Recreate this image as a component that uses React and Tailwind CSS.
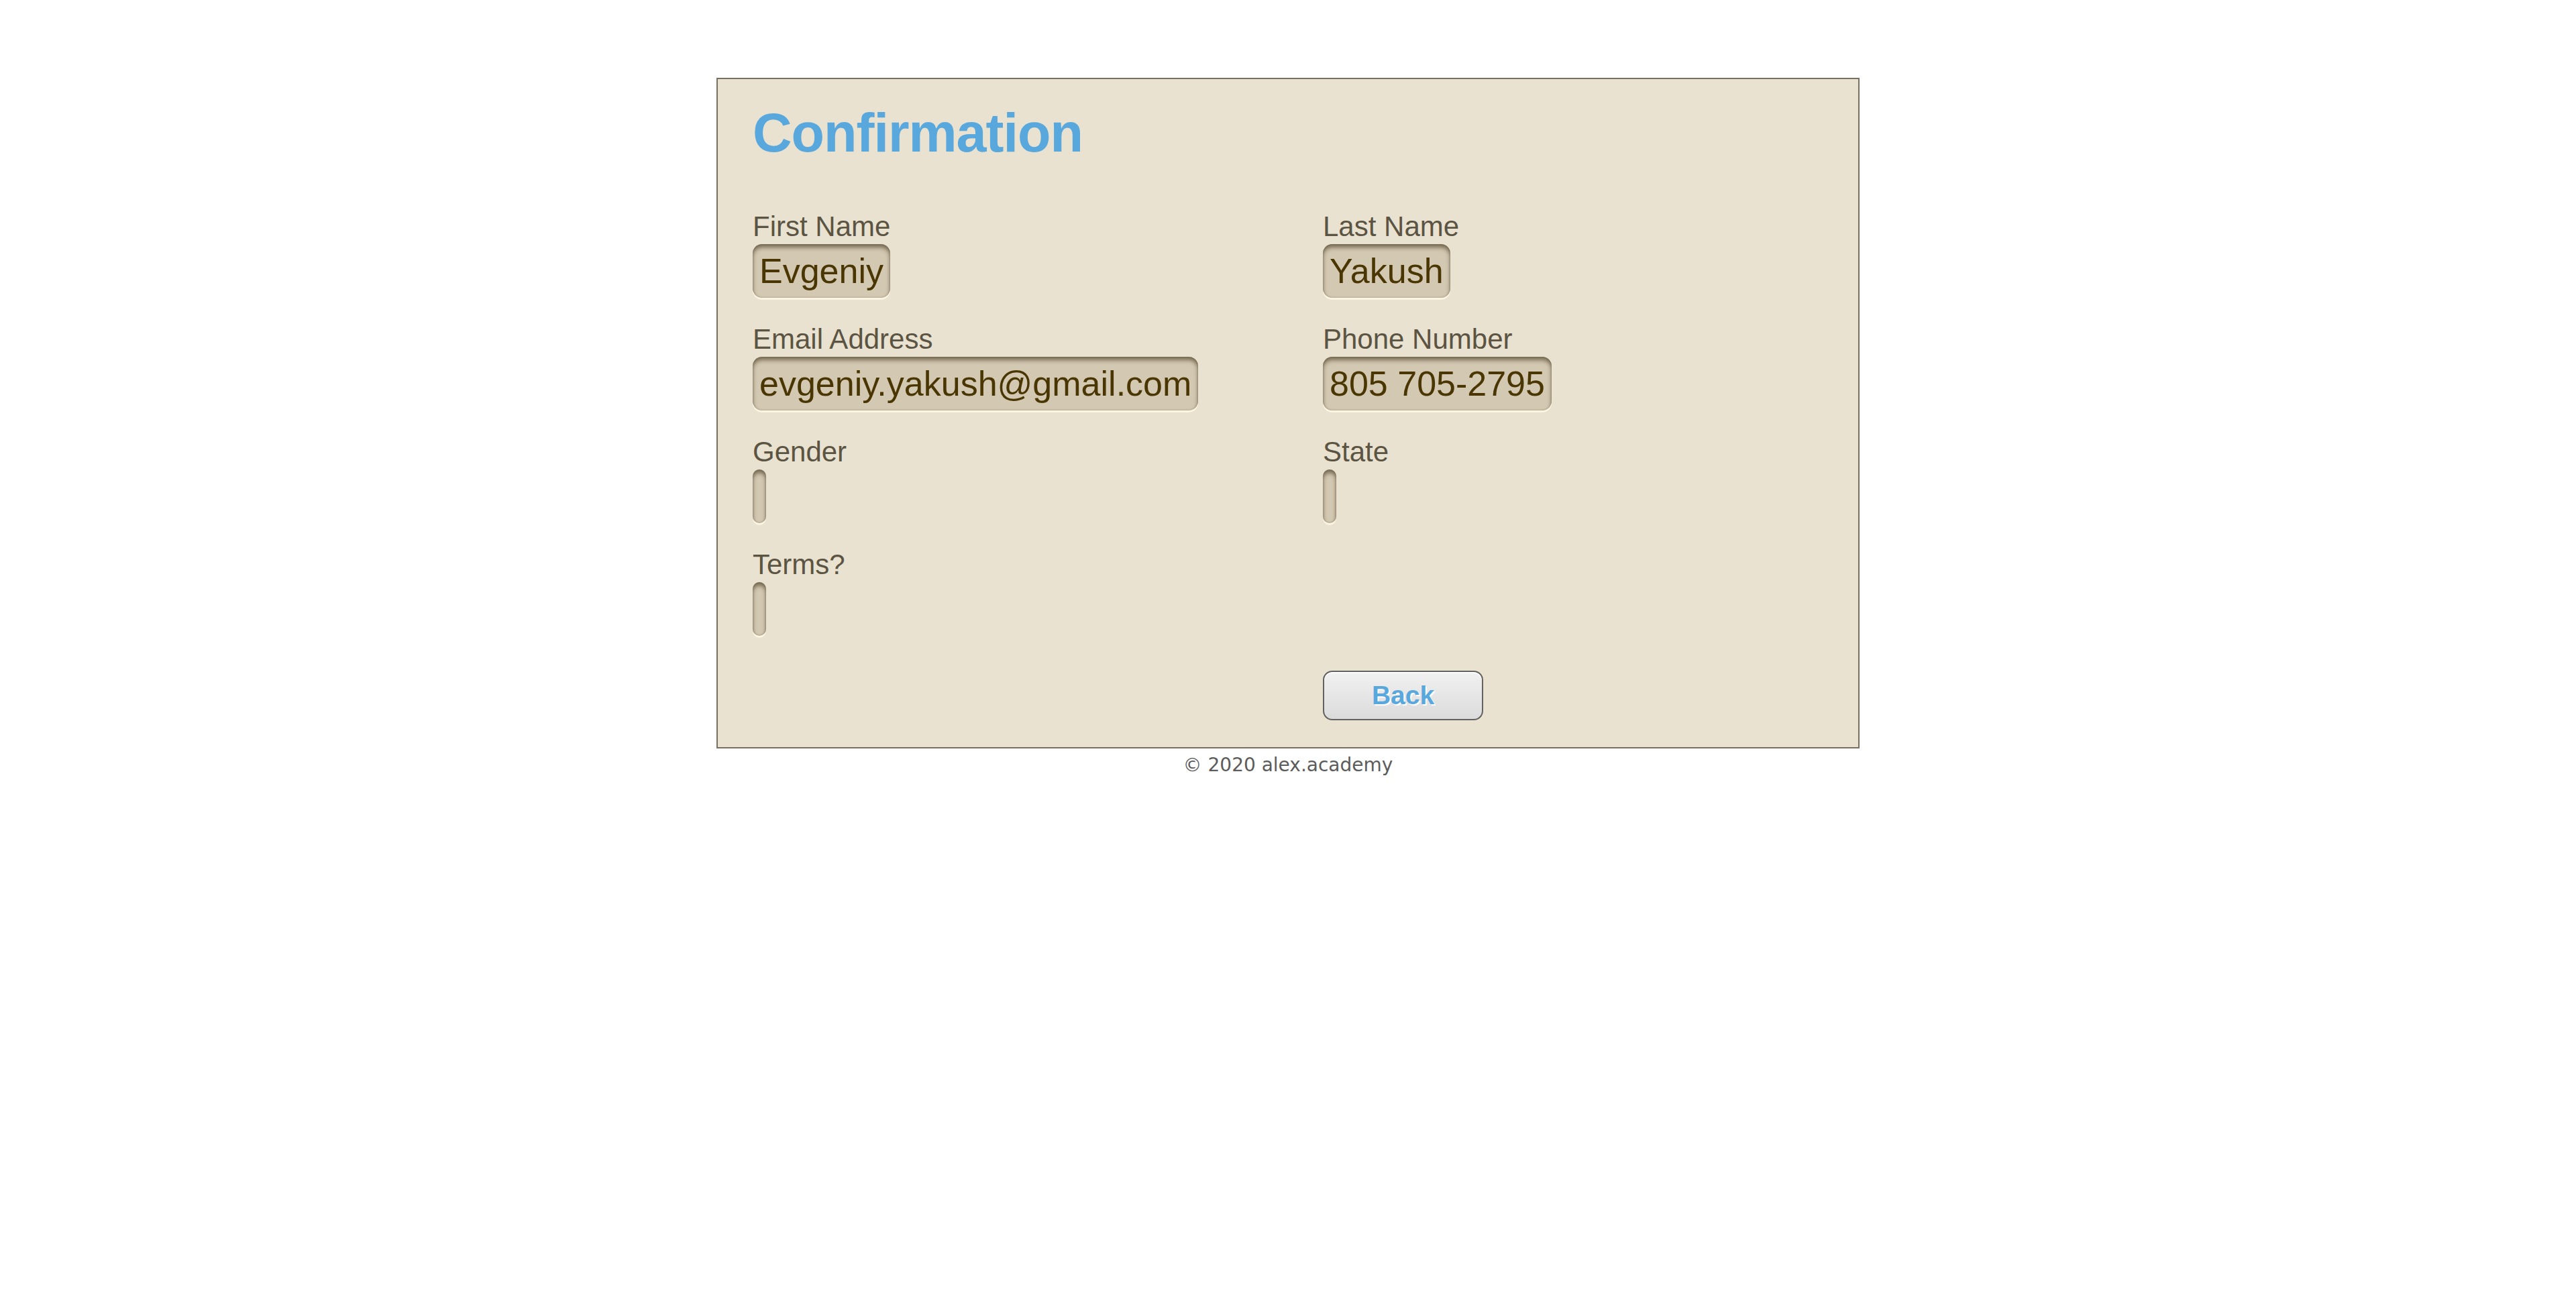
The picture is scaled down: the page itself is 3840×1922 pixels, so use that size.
import React from 'react';

const fields = [
  { label: 'First Name', value: 'Evgeniy' },
  { label: 'Last Name', value: 'Yakush' },
  { label: 'Email Address', value: 'evgeniy.yakush@gmail.com' },
  { label: 'Phone Number', value: '805 705-2795' },
  { label: 'Gender', value: '' },
  { label: 'State', value: '' },
  { label: 'Terms?', value: '' },
];

const Field = ({ label, value }) => (
  <div className="pl-[52px] mb-[38px]">
    <div className="h-[48px] leading-[48px] text-[42px] text-[#5c5443] whitespace-nowrap">{label}</div>
    <div className="mt-[2px] flex">
      <span className="h-[80px] min-w-[20px] px-[10px] flex items-center rounded-[14px] bg-[#d3c8b2] text-[52px] text-[#4a3603] whitespace-nowrap shadow-[inset_0_5px_6px_rgba(60,45,20,0.6),inset_0_0_3px_rgba(60,45,20,0.3),0_3px_0_#fdf5e2]">
        {value}
      </span>
    </div>
  </div>
);

export default function App() {
  return (
    <div className="min-h-screen bg-white pt-[116px] font-['Liberation_Sans',Arial,sans-serif]">
      <div className="mx-auto w-[1704px] border-2 border-[#767160] bg-[#e9e2d0] pt-[40px] pb-[40px]">
        <h1 className="pl-[52px] mb-[75px] text-[81px] leading-none font-bold tracking-[-1px] text-[#58a7dd]">
          Confirmation
        </h1>
        <div className="grid grid-cols-2">
          {fields.map((f) => (
            <Field key={f.label} label={f.label} value={f.value} />
          ))}
          <div />
          <div />
          <div className="pl-[52px] mt-[14px]">
            <button
              type="button"
              className="w-[239px] h-[74px] flex items-center justify-center rounded-[14px] border-2 border-[#626262] bg-linear-to-b from-[#f1f1f1] to-[#dbdbdb] shadow-[inset_0_2px_0_#ffffff] text-[39px] font-bold text-[#58a7dd] [text-shadow:2px_2px_0_#ffffff]"
            >
              Back
            </button>
          </div>
        </div>
      </div>
      <div className="mt-[8px] text-center text-[28px] leading-[33px] text-[#5c5c5c] font-['DejaVu_Sans',Verdana,sans-serif]">
        © 2020 alex.academy
      </div>
    </div>
  );
}
